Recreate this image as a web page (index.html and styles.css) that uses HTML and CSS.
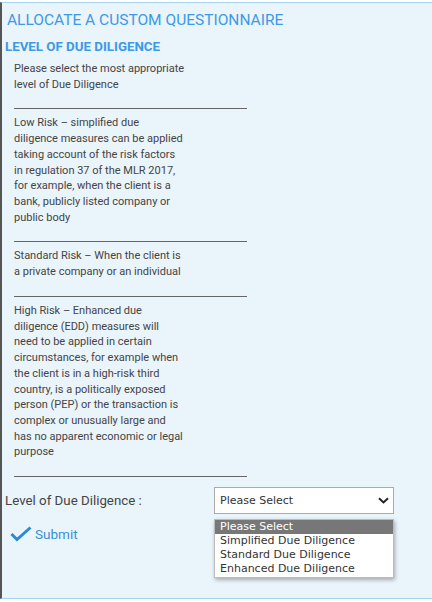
FILE: index.html
```html
<!DOCTYPE html>
<html>
<head>
<meta charset="utf-8">
<link rel="stylesheet" href="styles.css">
</head>
<body>
<div class="panel">
  <h1 class="title">ALLOCATE A CUSTOM QUESTIONNAIRE</h1>
  <h2 class="section">LEVEL OF DUE DILIGENCE</h2>
  <div class="info">
    <p class="text">Please select the most appropriate level of Due Diligence</p>
    <div class="rule"></div>
    <p class="text">Low Risk – simplified due diligence measures can be applied taking account of the risk factors in regulation 37 of the MLR 2017, for example, when the client is a bank, publicly listed company or public body</p>
    <div class="rule"></div>
    <p class="text">Standard Risk – When the client is a private company or an individual</p>
    <div class="rule"></div>
    <p class="text">High Risk – Enhanced due diligence (EDD) measures will need to be applied in certain circumstances, for example when the client is in a high-risk third country, is a politically exposed person (PEP) or the transaction is complex or unusually large and has no apparent economic or legal purpose</p>
    <div class="rule"></div>
  </div>
  <div class="form-row">
    <label class="label">Level of Due Diligence :</label>
    <div class="select-wrap">
      <div class="select">
        <span>Please Select</span>
        <svg class="chev" width="11" height="7" viewBox="0 0 11 7"><path d="M1 1.2 L5.5 5.5 L10 1.2" fill="none" stroke="#222" stroke-width="1.9"/></svg>
      </div>
      <ul class="options">
        <li class="opt active">Please Select</li>
        <li class="opt">Simplified Due Diligence</li>
        <li class="opt">Standard Due Diligence</li>
        <li class="opt">Enhanced Due Diligence</li>
      </ul>
    </div>
  </div>
  <div class="submit">
    <svg width="22" height="16" viewBox="0 0 22 16"><path d="M1.5 8 L7 13.5 L20.5 1.5" fill="none" stroke="#2b8ad6" stroke-width="3"/></svg>
    <span>Submit</span>
  </div>
</div>
</body>
</html>
```

FILE: styles.css
```css
html, body {
  margin: 0;
  padding: 0;
  background: #ffffff;
}
body {
  font-family: Roboto, "Liberation Sans", sans-serif;
  color: #444;
}
.panel {
  margin-top: 2px;
  height: 597px;
  box-sizing: border-box;
  background: #eaf4fb;
  border-top: 1px solid #a6d3ef;
  border-bottom: 1px solid #a6d3ef;
  border-left: 2px solid #555;
  padding-top: 2px;
}
.title {
  margin: 0;
  padding: 6px 0 0 5px;
  font-size: 15.5px;
  font-weight: 400;
  line-height: 18px;
  color: #3d9ae6;
}
.section {
  margin: 0;
  padding: 10px 0 0 3px;
  font-size: 13.3px;
  font-weight: 700;
  line-height: 16px;
  color: #3d9ae6;
}
.info {
  padding: 6px 0 0 12px;
  font-size: 11px;
  line-height: 15.714px;
}
.text {
  margin: 0;
  width: 171px;
}
.rule {
  width: 233px;
  height: 0;
  border-bottom: 1px solid #666;
  margin: 16px 0 6px 0;
}
.form-row {
  display: flex;
  align-items: center;
  margin-top: 10px;
  padding-left: 3px;
}
.label {
  width: 209px;
  font-size: 13.3px;
}
.select-wrap {
  position: relative;
  width: 180px;
}
.select {
  height: 27px;
  box-sizing: border-box;
  background: #fff;
  border: 1px solid #aaa;
  display: flex;
  align-items: center;
  justify-content: space-between;
  padding: 0 4px 0 5px;
  font-family: "DejaVu Sans", Verdana, sans-serif;
  font-size: 11px;
  color: #333;
}
.options {
  position: absolute;
  left: 0;
  top: 32px;
  width: 180px;
  margin: 0;
  padding: 0 0 1px 0;
  list-style: none;
  background: #fff;
  border: 1px solid #bbb;
  box-sizing: border-box;
  box-shadow: 1px 2px 4px rgba(0,0,0,0.3);
  font-family: "DejaVu Sans", Verdana, sans-serif;
  font-size: 11px;
  color: #333;
}
.opt {
  height: 14px;
  line-height: 14px;
  padding-left: 5px;
}
.opt.active {
  background: #777;
  color: #fff;
}
.submit {
  display: flex;
  align-items: center;
  gap: 3px;
  margin-top: 12px;
  padding-left: 8px;
  color: #3a8fd6;
  font-size: 13.5px;
}
```
